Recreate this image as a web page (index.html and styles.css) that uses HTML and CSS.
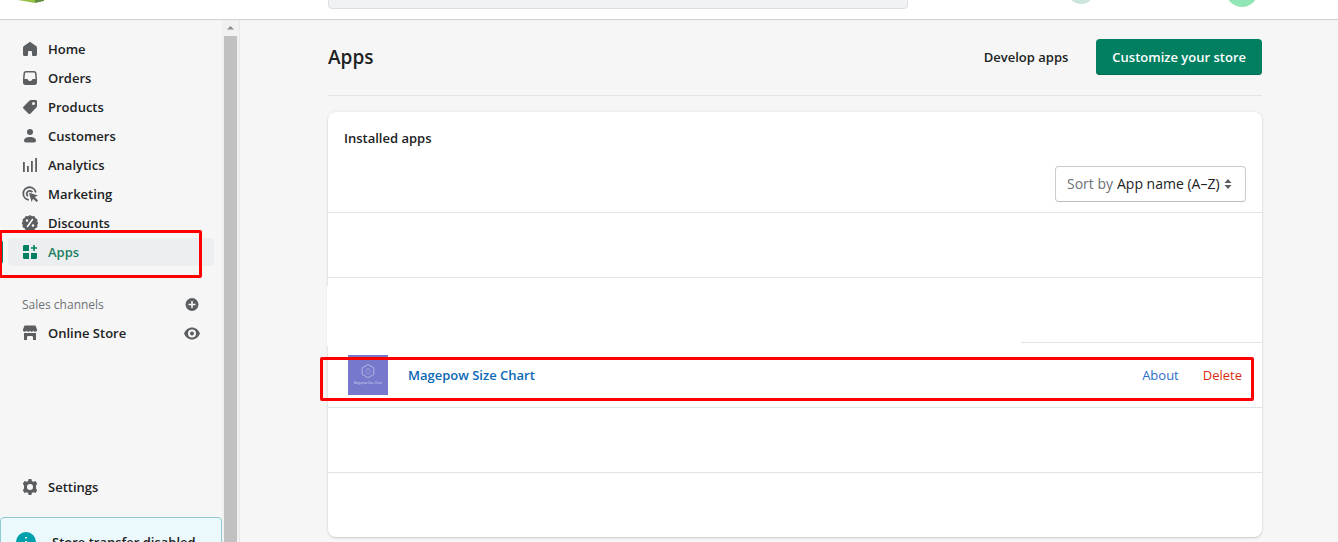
FILE: index.html
```html
<!DOCTYPE html>
<html lang="en">
<head>
<meta charset="utf-8">
<meta name="viewport" content="width=device-width, initial-scale=1">
<title>Apps</title>
<link rel="stylesheet" href="styles.css">
</head>
<body>
<header class="topbar">
  <a class="logo" href="#" aria-label="Store home">
    <svg width="26" height="30" viewBox="0 0 26 30"><path d="M3 3 17 1v29L0 27z" fill="#95bf47"/><path d="M17 1l5 2 4 25-9 2z" fill="#5e8e3e"/></svg>
  </a>
  <div class="topbar-main">
    <input class="search" type="search" aria-label="Search">
    <button class="setup" type="button" aria-label="Setup guide"></button>
    <button class="avatar" type="button" aria-label="Account"></button>
  </div>
</header>
<div class="frame">
  <aside class="sidebar">
    <nav class="nav" aria-label="Main">
      <a class="nav-item" href="#"><svg class="icon" viewBox="0 0 20 20"><path d="M3 8.600c0-.7.3-1.300.9-1.700l5.100-3.500c.6-.4 1.400-.4 2 0l5.100 3.500c.6.4.9 1 .9 1.700V15.500c0 .9-.6 1.500-1.500 1.500H13a1 1 0 0 1-1-1v-3a1 1 0 0 0-1-1H9a1 1 0 0 0-1 1v3a1 1 0 0 1-1 1H4.500C3.600 17 3 16.400 3 15.500z"/></svg>Home</a>
      <a class="nav-item" href="#"><svg class="icon" viewBox="0 0 20 20"><path fill-rule="evenodd" d="M6 3h8c1.500 0 2.300.8 2.500 2.200L17 11v3.500c0 1.500-1 2.500-2.500 2.500h-9C4 17 3 16 3 14.500V11l.5-5.800C3.700 3.800 4.500 3 6 3zm.2 1.500c-.7 0-1.100.4-1.200 1L4.500 11H7c.6 0 .8.4 1.100.9.500.8 1 1.100 1.900 1.100s1.400-.3 1.900-1.100c.3-.5.500-.9 1.100-.9h2.500L15 5.500c-.1-.6-.5-1-1.200-1z"/></svg>Orders</a>
      <a class="nav-item" href="#"><svg class="icon" viewBox="0 0 20 20"><path fill-rule="evenodd" d="M11 3h4.500c.9 0 1.500.6 1.500 1.500V9c0 .6-.2 1-.6 1.400l-5.800 6c-.7.7-1.600.7-2.300 0l-4.700-4.700c-.7-.7-.7-1.600 0-2.300l6-5.800C10 3.200 10.400 3 11 3zm2.500 2a1.500 1.500 0 1 0 0 3 1.500 1.500 0 0 0 0-3z"/></svg>Products</a>
      <a class="nav-item" href="#"><svg class="icon" viewBox="0 0 20 20"><circle cx="10" cy="6" r="3"/><path d="M4 14.500C4 12.300 6.500 11 10 11s6 1.300 6 3.500c0 1.300-.8 2-2 2H6c-1.200 0-2-.7-2-2z"/></svg>Customers</a>
      <a class="nav-item" href="#"><svg class="icon" viewBox="0 0 20 20"><path d="M3 7h1.800v10H3zM7 11h1.800v6H7zM11 6h1.800v11H11zM15.200 3H17v14h-1.800z"/></svg>Analytics</a>
      <a class="nav-item" href="#"><svg class="icon" viewBox="0 0 20 20"><path d="M8.800 15.800A6.300 6.300 0 1 1 15.800 8.500M8 12.300a3 3 0 1 1 4.300-4" fill="none" stroke="currentColor" stroke-width="1.800"/><path d="M9 8.700l9 2.700-3.200 1.700 3.300 3.400-1.600 1.600-3.400-3.300-1.500 3.200z"/></svg>Marketing</a>
      <a class="nav-item" href="#"><svg class="icon" viewBox="0 0 20 20"><path d="M10 2l2 1.200 2.300-.1 1.100 2 2 1.200-.1 2.200L18.200 10l-.9 2 .1 2.200-2 1.100-1.100 2-2.300-.1L10 18.200l-2-1-2.300.1-1.100-2-2-1.100.1-2.200L1.800 10l.9-1.500-.1-2.200 2-1.200 1.100-2 2.300.1z"/><path d="M7.500 13.500l5-7" stroke="#fff" stroke-width="1.500" stroke-linecap="round"/><circle cx="7" cy="7.500" r="1.200" fill="#fff"/><circle cx="13" cy="12.500" r="1.200" fill="#fff"/></svg>Discounts</a>
      <a class="nav-item nav-item-active" href="#" aria-current="page"><svg class="icon" viewBox="0 0 20 20"><path d="M4.500 3H9v6H3V4.500C3 3.600 3.600 3 4.500 3zM3 11h6v6H4.500C3.600 17 3 16.400 3 15.500zM11 11h6v4.500c0 .9-.6 1.500-1.500 1.500H11zM13.200 3h1.600v2.200H17v1.600h-2.200V9h-1.600V6.800H11V5.200h2.200z"/></svg>Apps<span class="marker marker-nav"></span></a>
    </nav>
    <section class="channels">
      <div class="channels-head">
        <h2 class="channels-title">Sales channels</h2>
        <button class="icon-button" type="button" aria-label="Add sales channel"><svg class="icon" viewBox="0 0 20 20"><circle cx="10" cy="9.500" r="6.500"/><path d="M10 6v7M6.500 9.500h7" stroke="#f6f6f7" stroke-width="1.600"/></svg></button>
      </div>
      <div class="channel-row">
        <a class="nav-item" href="#"><svg class="icon" viewBox="0 0 20 20"><path d="M4.500 2.500h11L17 6.500c.3 1.300-.6 2.300-1.900 2.300-.8 0-1.400-.4-1.700-1-.4.600-1 1-1.700 1S10.400 8.400 10 7.800c-.4.600-1 1-1.700 1s-1.300-.4-1.700-1c-.3.600-.9 1-1.700 1C3.600 8.800 2.700 7.800 3 6.500z"/><path d="M4 10h12v6.500c0 .4-.2.500-.5.500H13v-2.500c0-1-.6-1.500-1.500-1.500h-3c-.9 0-1.500.5-1.500 1.500V17H4.500c-.3 0-.5-.1-.5-.5z"/></svg>Online Store</a>
        <button class="icon-button" type="button" aria-label="View store"><svg class="icon" viewBox="0 0 20 20"><path fill-rule="evenodd" d="M2 10.500c1.500-3.700 4.500-6 8-6s6.500 2.300 8 6c-1.500 3.700-4.500 6-8 6s-6.500-2.300-8-6zm8-4a4 4 0 1 0 0 8 4 4 0 0 0 0-8z"/><circle cx="10" cy="10.500" r="2"/></svg></button>
      </div>
    </section>
    <a class="nav-item settings" href="#"><svg class="icon" viewBox="0 0 20 20"><path fill-rule="evenodd" d="M8.600 2h2.800l.5 2 1.400.8 2.200-.7 1.700 2.700L16 8.600v2.800l1.200 1.800-1.700 2.700-2.200-.7-1.400.8-.5 2H8.600l-.5-2-1.400-.8-2.200.7-1.700-2.700L4 11.400V8.600L2.800 6.800l1.700-2.700 2.200.7 1.400-.8zM10 7a3 3 0 1 0 0 6 3 3 0 0 0 0-6z"/></svg>Settings</a>
    <div class="notice"><svg class="notice-icon" viewBox="0 0 20 20"><circle cx="10" cy="10" r="10" fill="#00a0ac"/><path d="M10 5v1.500M10 9v6" stroke="#fff" stroke-width="1.800"/></svg>Store transfer disabled</div>
  </aside>
  <div class="scrollbar" aria-hidden="true">
    <svg class="scroll-arrow" viewBox="0 0 17 17"><path d="M5 10.500h7L8.500 7z" fill="#8b8b8b"/></svg>
    <div class="scroll-thumb"></div>
  </div>
  <main class="main">
    <div class="page-head">
      <h1 class="page-title">Apps</h1>
      <a class="develop" href="#">Develop apps</a>
      <button class="primary" type="button">Customize your store</button>
    </div>
    <section class="card">
      <h2 class="card-title">Installed apps</h2>
      <div class="sort-row">
        <div class="sort">
          <label class="sort-label" for="sort">Sort by</label>
          <select class="sort-select" id="sort"><option>App name (A–Z)</option></select>
          <svg class="sort-icon" viewBox="0 0 8 12"><path d="M4 1l3.500 4h-7zM4 11l3.500-4h-7z" fill="#5c5f62"/></svg>
        </div>
      </div>
      <ul class="apps">
        <li class="app"></li>
        <li class="app"><span class="blank"></span></li>
        <li class="app">
          <svg class="app-logo" viewBox="0 0 40 40"><rect width="40" height="40" fill="#7678cc"/><path d="M20 9.500l5.800 3.300v6.600L20 22.700l-5.800-3.300v-6.600z" fill="none" stroke="#b3b4e4"/><path d="M18 18.500v-3.500h4v3.500zM19 15v-1.500h2V15" fill="none" stroke="#9698d9" stroke-width=".8"/><text class="app-logo-text" x="20" y="28.500" text-anchor="middle">Magepow Size Chart</text></svg>
          <a class="app-name" href="#">Magepow Size Chart</a>
          <a class="about" href="#">About</a>
          <button class="delete" type="button">Delete</button>
          <span class="marker marker-app"></span>
        </li>
        <li class="app"></li>
        <li class="app"></li>
      </ul>
    </section>
  </main>
</div>
</body>
</html>
```
FILE: styles.css
```css
* { box-sizing: border-box; }
body {
  margin: 0;
  height: 100vh;
  overflow: hidden;
  display: flex;
  flex-direction: column;
  background: #f6f6f6;
  color: #202223;
  font: 600 13px/20px "Open Sans", "Noto Sans", sans-serif;
}
h1, h2, ul { margin: 0; padding: 0; }
a { color: inherit; text-decoration: none; }
button, input, select { font: inherit; color: inherit; border: 0; padding: 0; background: none; }

.topbar {
  flex: none;
  height: 19px;
  display: grid;
  grid-template-columns: 240px 1fr;
  background: #fff;
  box-shadow: 0 1px 1px #d2d2d2;
  z-index: 1;
  overflow: hidden;
  overflow: clip;
}
.logo { display: flex; align-items: flex-end; height: 3px; padding-left: 18px; }
.logo svg { flex: none; }
.topbar-main { display: flex; align-items: flex-end; height: 9px; padding: 0 80px 0 88px; }
.search {
  flex: 0 1 580px;
  min-width: 0;
  height: 36px;
  border: 1px solid #dcdfe3;
  border-radius: 4px;
  background: #f1f2f4;
}
.setup { width: 28px; height: 28px; margin: 0 0 5px auto; border-radius: 50%; background: #cce6dd; }
.avatar { width: 32px; height: 32px; margin: 0 0 2px 131px; border-radius: 50%; background: #92e6b5; }

.frame { flex: 1; min-height: 0; display: grid; grid-template-columns: 222px 18px 1fr; }
.sidebar { overflow: hidden; padding-top: 16px; display: flex; flex-direction: column; }
.nav { display: grid; gap: 1px; padding: 0 8px; }
.icon { flex: none; width: 20px; height: 20px; fill: #5c5f62; color: #5c5f62; }
.nav-item {
  flex: 1;
  display: flex;
  align-items: center;
  gap: 8px;
  height: 28px;
  padding-left: 12px;
  border-radius: 4px;
}
.nav-item-active { position: relative; background: #edeeef; color: #1b7f62; }
.nav-item-active .icon { fill: #008060; }
.nav-item-active::before {
  content: "";
  position: absolute;
  left: -8px;
  top: 2px;
  bottom: 2px;
  width: 3px;
  border-radius: 0 4px 4px 0;
  background: #008060;
}
.marker { position: absolute; border: 3px solid #f00; border-radius: 2px; pointer-events: none; }
.marker-nav { left: -9px; right: 12px; top: -8px; height: 48px; }
.marker-app { left: -8px; right: 8px; top: 14px; height: 44px; }
.channels { padding: 25px 20px 0 8px; }
.channels-head, .channel-row { display: flex; align-items: center; height: 28px; }
.channels-title { flex: 1; padding-left: 14px; font-size: 12px; font-weight: 400; color: #6d7175; }
.icon-button { display: flex; }
.settings { flex: none; margin: 126px 8px 16px; }
.notice {
  flex: none;
  display: flex;
  align-items: center;
  gap: 16px;
  padding: 14px 15px;
  border: 1px solid #8fc9cf;
  border-radius: 4px;
  background: #ebf9fc;
}
.notice-icon { width: 20px; height: 20px; }
.scrollbar { background: #f1f1f1; border-right: 1px solid #e8e8e8; display: flex; flex-direction: column; }
.scroll-arrow { flex: none; width: 17px; height: 17px; }
.scroll-thumb { flex: 1; margin: 0 2px; background: #c1c1c1; }

.main { padding: 20px 76px 0 88px; min-width: 0; }
.page-head {
  display: flex;
  align-items: center;
  gap: 28px;
  padding-bottom: 20px;
  border-bottom: 1px solid #e1e3e5;
}
.page-title { flex: 1; font-size: 19px; line-height: 28px; font-weight: 600; }
.primary {
  height: 36px;
  padding: 0 16px;
  border-radius: 4px;
  background: #008060;
  box-shadow: inset 0 -1px 0 #006e52;
  color: #fff;
}
.card {
  margin-top: 16px;
  border-radius: 8px;
  background: #fff;
  box-shadow: 0 0 4px rgba(23, 24, 24, .06), 0 1px 2px rgba(0, 0, 0, .15);
}
.card-title { padding: 16px 16px 0; font-size: 13px; font-weight: 600; }
.sort-row { display: flex; justify-content: flex-end; padding: 18px 16px 10px; }
.sort {
  display: flex;
  align-items: center;
  gap: 4px;
  height: 36px;
  padding: 0 13px 0 11px;
  border: 1px solid #c9cccf;
  border-bottom-color: #babfc3;
  border-radius: 4px;
  font-size: 14px;
  font-weight: 400;
}
.sort-label { color: #6d7175; }
.sort-select { appearance: none; }
.sort-icon { width: 8px; height: 12px; }
.apps { list-style: none; }
.app {
  position: relative;
  display: flex;
  align-items: center;
  height: 65px;
  padding: 0 20px;
  border-top: 1px solid #e1e3e5;
}
.blank { position: absolute; left: -1px; right: 241px; top: 8px; height: 60px; background: #fff; z-index: 1; }
.app-logo { width: 40px; height: 40px; }
.app-logo-text { font: 3px "Open Sans", sans-serif; fill: #d5d6f2; }
.app-name { margin: 0 auto 0 20px; color: #0b68b5; }
.about { font-weight: 400; color: #2c6ecb; }
.delete { margin-left: 24px; font-weight: 400; color: #d72c0d; }
```
